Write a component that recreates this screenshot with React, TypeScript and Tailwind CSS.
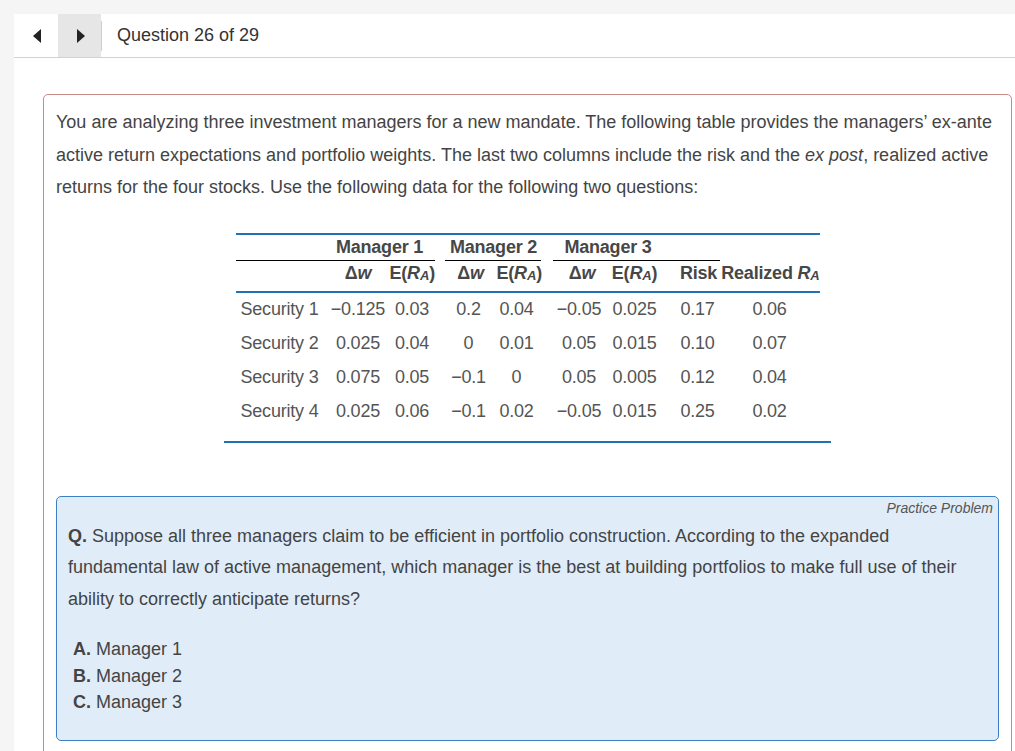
import React from "react";

const RA = () => (
  <>
    E(<i>R</i>
    <sub className="text-[13px] italic relative top-[1px]">A</sub>)
  </>
);

const Dw = () => (
  <>
    Δ<i>w</i>
  </>
);

const rows = [
  ["Security 1", "−0.125", "0.03", "0.2", "0.04", "−0.05", "0.025", "0.17", "0.06"],
  ["Security 2", "0.025", "0.04", "0", "0.01", "0.05", "0.015", "0.10", "0.07"],
  ["Security 3", "0.075", "0.05", "−0.1", "0", "0.05", "0.005", "0.12", "0.04"],
  ["Security 4", "0.025", "0.06", "−0.1", "0.02", "−0.05", "0.015", "0.25", "0.02"],
];

const cols = "grid grid-cols-[91px_63px_45px_10px_48px_48px_12px_53px_58px_56px_100px]";

export default function App() {
  return (
    <div className="min-h-screen bg-[#f5f5f5] pt-[14px] pl-[14px] font-['Liberation_Sans',Arial,sans-serif] text-[#3d3d3d] overflow-hidden">
      <div className="bg-white min-h-[800px]">
        {/* header */}
        <div className="flex h-[44px] border-b border-[#d2d2d2]">
          <div className="w-[44px] flex items-center justify-center">
            <div className="w-0 h-0 border-y-[7px] border-y-transparent border-r-[8px] border-r-[#222] ml-[2px]" />
          </div>
          <div className="w-[43px] bg-[#e6e6e6] flex items-center justify-center">
            <div className="w-0 h-0 border-y-[7px] border-y-transparent border-l-[8px] border-l-[#222] ml-[2px]" />
          </div>
          <div className="self-center w-px h-[30px] bg-[#cfcfcf]" />
          <div className="flex items-center pl-[15px] text-[18px] text-[#333]">Question 26 of 29</div>
        </div>

        {/* content */}
        <div className="pt-[36px] pl-[29px] pr-[3px]">
          <div className="border border-[#c98a84] rounded-[5px] px-[12px] pt-[11px] pb-[40px]">
            <p className="text-[18px] leading-[32.5px] text-[#444] whitespace-nowrap">
              You are analyzing three investment managers for a new mandate. The following table provides the managers’ ex-ante
              <br />
              active return expectations and portfolio weights. The last two columns include the risk and the <i>ex post</i>, realized active
              <br />
              returns for the four stocks. Use the following data for the following two questions:
            </p>

            {/* table */}
            <div className="w-[607px] mx-auto mt-[29px] border-b-2 border-[#1f72b8] pb-[12px]">
              <div className="w-[584px] mx-auto border-t-2 border-[#1f72b8] text-[18px] tracking-[-0.2px] text-[#555]">
                <div className={`${cols} font-bold text-[#474747]`}>
                  {/* header row 1 */}
                  <div className="h-[26px] border-b border-black" />
                  <div className="col-span-2 h-[26px] border-b border-black flex items-center justify-center pr-[2px] leading-[20px]">Manager 1</div>
                  <div />
                  <div className="col-span-2 h-[26px] border-b border-black flex items-center justify-center pl-[2px] leading-[20px]">Manager 2</div>
                  <div />
                  <div className="col-span-2 h-[26px] border-b border-black flex items-center justify-center leading-[20px]">Manager 3</div>
                  <div className="h-[26px] border-b border-black" />
                  <div />
                  {/* header row 2 */}
                  <div className="h-[30px]" />
                  <div className="h-[30px] pt-[2px] leading-[20px] text-center"><Dw /></div>
                  <div className="h-[30px] pt-[2px] leading-[20px] text-center pr-[2px] whitespace-nowrap"><RA /></div>
                  <div />
                  <div className="h-[30px] pt-[2px] leading-[20px] text-center pl-[4px]"><Dw /></div>
                  <div className="h-[30px] pt-[2px] leading-[20px] text-center pl-[4px] whitespace-nowrap"><RA /></div>
                  <div />
                  <div className="h-[30px] pt-[2px] leading-[20px] text-center pl-[6px]"><Dw /></div>
                  <div className="h-[30px] pt-[2px] leading-[20px] text-center whitespace-nowrap"><RA /></div>
                  <div className="h-[30px] pt-[2px] leading-[20px] text-center pl-[14px] whitespace-nowrap">Risk</div>
                  <div className="h-[30px] pt-[2px] leading-[20px] text-right whitespace-nowrap">Realized <i>R</i><sub className="text-[13px] italic relative top-[1px]">A</sub></div>
                </div>
                <div className="h-[2px] bg-[#1f72b8]" />
                <div className={cols}>
                  {rows.map((r, i) => (
                    <React.Fragment key={i}>
                      <div className="h-[34px] flex items-center pl-[5px] whitespace-nowrap">{r[0]}</div>
                      <div className="h-[34px] flex items-center justify-center">{r[1]}</div>
                      <div className="h-[34px] flex items-center justify-center">{r[2]}</div>
                      <div />
                      <div className="h-[34px] flex items-center justify-center">{r[3]}</div>
                      <div className="h-[34px] flex items-center justify-center">{r[4]}</div>
                      <div />
                      <div className="h-[34px] flex items-center justify-center">{r[5]}</div>
                      <div className="h-[34px] flex items-center justify-center">{r[6]}</div>
                      <div className="h-[34px] flex items-center justify-center pl-[12px]">{r[7]}</div>
                      <div className="h-[34px] flex items-center justify-center">{r[8]}</div>
                    </React.Fragment>
                  ))}
                </div>
              </div>
            </div>

            {/* practice box */}
            <div className="mt-[53px] border border-[#3b80c4] rounded-[5px] bg-[#e0edf9] pl-[11px] pr-[5px] pt-[2px] pb-[24px]">
              <div className="text-right text-[14px] italic leading-[18px] text-[#555]">Practice Problem</div>
              <p className="mt-[4px] text-[18px] leading-[31.5px] text-[#444] whitespace-nowrap">
                <b>Q.</b> Suppose all three managers claim to be efficient in portfolio construction. According to the expanded
                <br />
                fundamental law of active management, which manager is the best at building portfolios to make full use of their
                <br />
                ability to correctly anticipate returns?
              </p>
              <div className="mt-[21px] pl-[5px] text-[18px] leading-[26.5px] text-[#444]">
                <div><b>A.</b> Manager 1</div>
                <div><b>B.</b> Manager 2</div>
                <div><b>C.</b> Manager 3</div>
              </div>
            </div>
          </div>
        </div>
      </div>
    </div>
  );
}
